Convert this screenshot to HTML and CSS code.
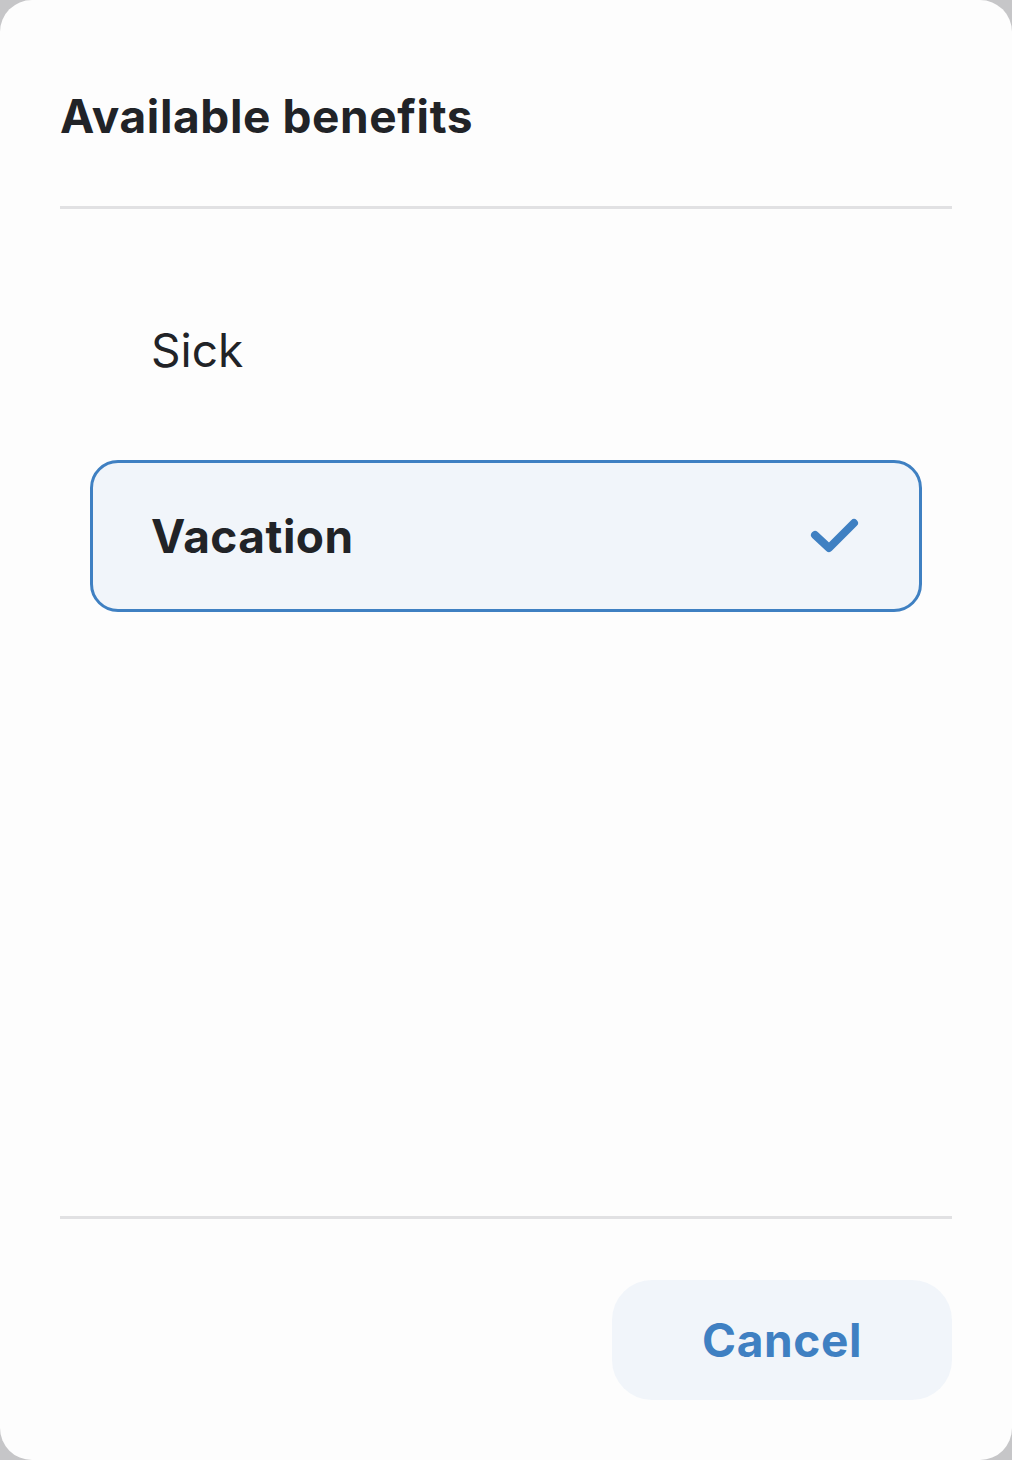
FILE: index.html
```html
<!DOCTYPE html>
<html lang="en">
<head>
<meta charset="utf-8">
<title>Available benefits</title>
<link rel="stylesheet" href="styles.css">
</head>
<body>
<div class="modal">
  <header class="modal-header">
    <h1 class="modal-title">Available benefits</h1>
  </header>
  <div class="divider"></div>
  <ul class="options">
    <li class="option">
      <span class="option-label">Sick</span>
    </li>
    <li class="option selected">
      <span class="option-label">Vacation</span>
      <svg class="check" width="52" height="40" viewBox="0 0 52 40" aria-hidden="true">
        <polyline points="7,19 21,32 46,7" fill="none" stroke="#3f80c2" stroke-width="8" stroke-linecap="round" stroke-linejoin="round"/>
      </svg>
    </li>
  </ul>
  <div class="divider"></div>
  <footer class="modal-footer">
    <button class="cancel-btn" type="button">Cancel</button>
  </footer>
</div>
</body>
</html>
```
FILE: styles.css
```css
* { box-sizing: border-box; }

html, body {
  margin: 0;
  padding: 0;
  height: 100%;
}

body {
  background: #c6c6c8;
  font-family: Inter, "Noto Sans", "Liberation Sans", sans-serif;
  color: #212327;
}

.modal {
  height: 1460px;
  background: #fdfdfd;
  border-radius: 32px;
  display: flex;
  flex-direction: column;
}

.modal-header {
  padding: 89px 60px 63px 60px;
}

.modal-title {
  margin: 0;
  font-size: 46px;
  line-height: 54px;
  font-weight: 700;
  letter-spacing: 0.6px;
  color: #212327;
}

.divider {
  height: 3px;
  background: #e1e1e3;
  margin: 0 60px;
}

.options {
  list-style: none;
  margin: 0;
  padding: 65px 90px 0 90px;
  flex: 1;
  display: flex;
  flex-direction: column;
  gap: 34px;
}

.option {
  height: 152px;
  display: flex;
  align-items: center;
  justify-content: space-between;
  padding: 0 59px 0 58px;
  border: 3px solid transparent;
  border-radius: 28px;
}

.option-label {
  font-size: 46px;
  font-weight: 400;
  color: #212327;
}

.option.selected {
  background: #f1f5fa;
  border-color: #3f80c2;
}

.option.selected .option-label {
  font-weight: 700;
  letter-spacing: 0.5px;
}

.check {
  display: block;
}

.modal-footer {
  display: flex;
  justify-content: flex-end;
  padding: 61px 60px 60px 60px;
}

.cancel-btn {
  width: 340px;
  height: 120px;
  border: none;
  border-radius: 40px;
  background: #f1f5fa;
  color: #3f80c2;
  font-family: Inter, "Noto Sans", "Liberation Sans", sans-serif;
  font-size: 46px;
  font-weight: 700;
  letter-spacing: 0.6px;
  padding: 0;
}
```
